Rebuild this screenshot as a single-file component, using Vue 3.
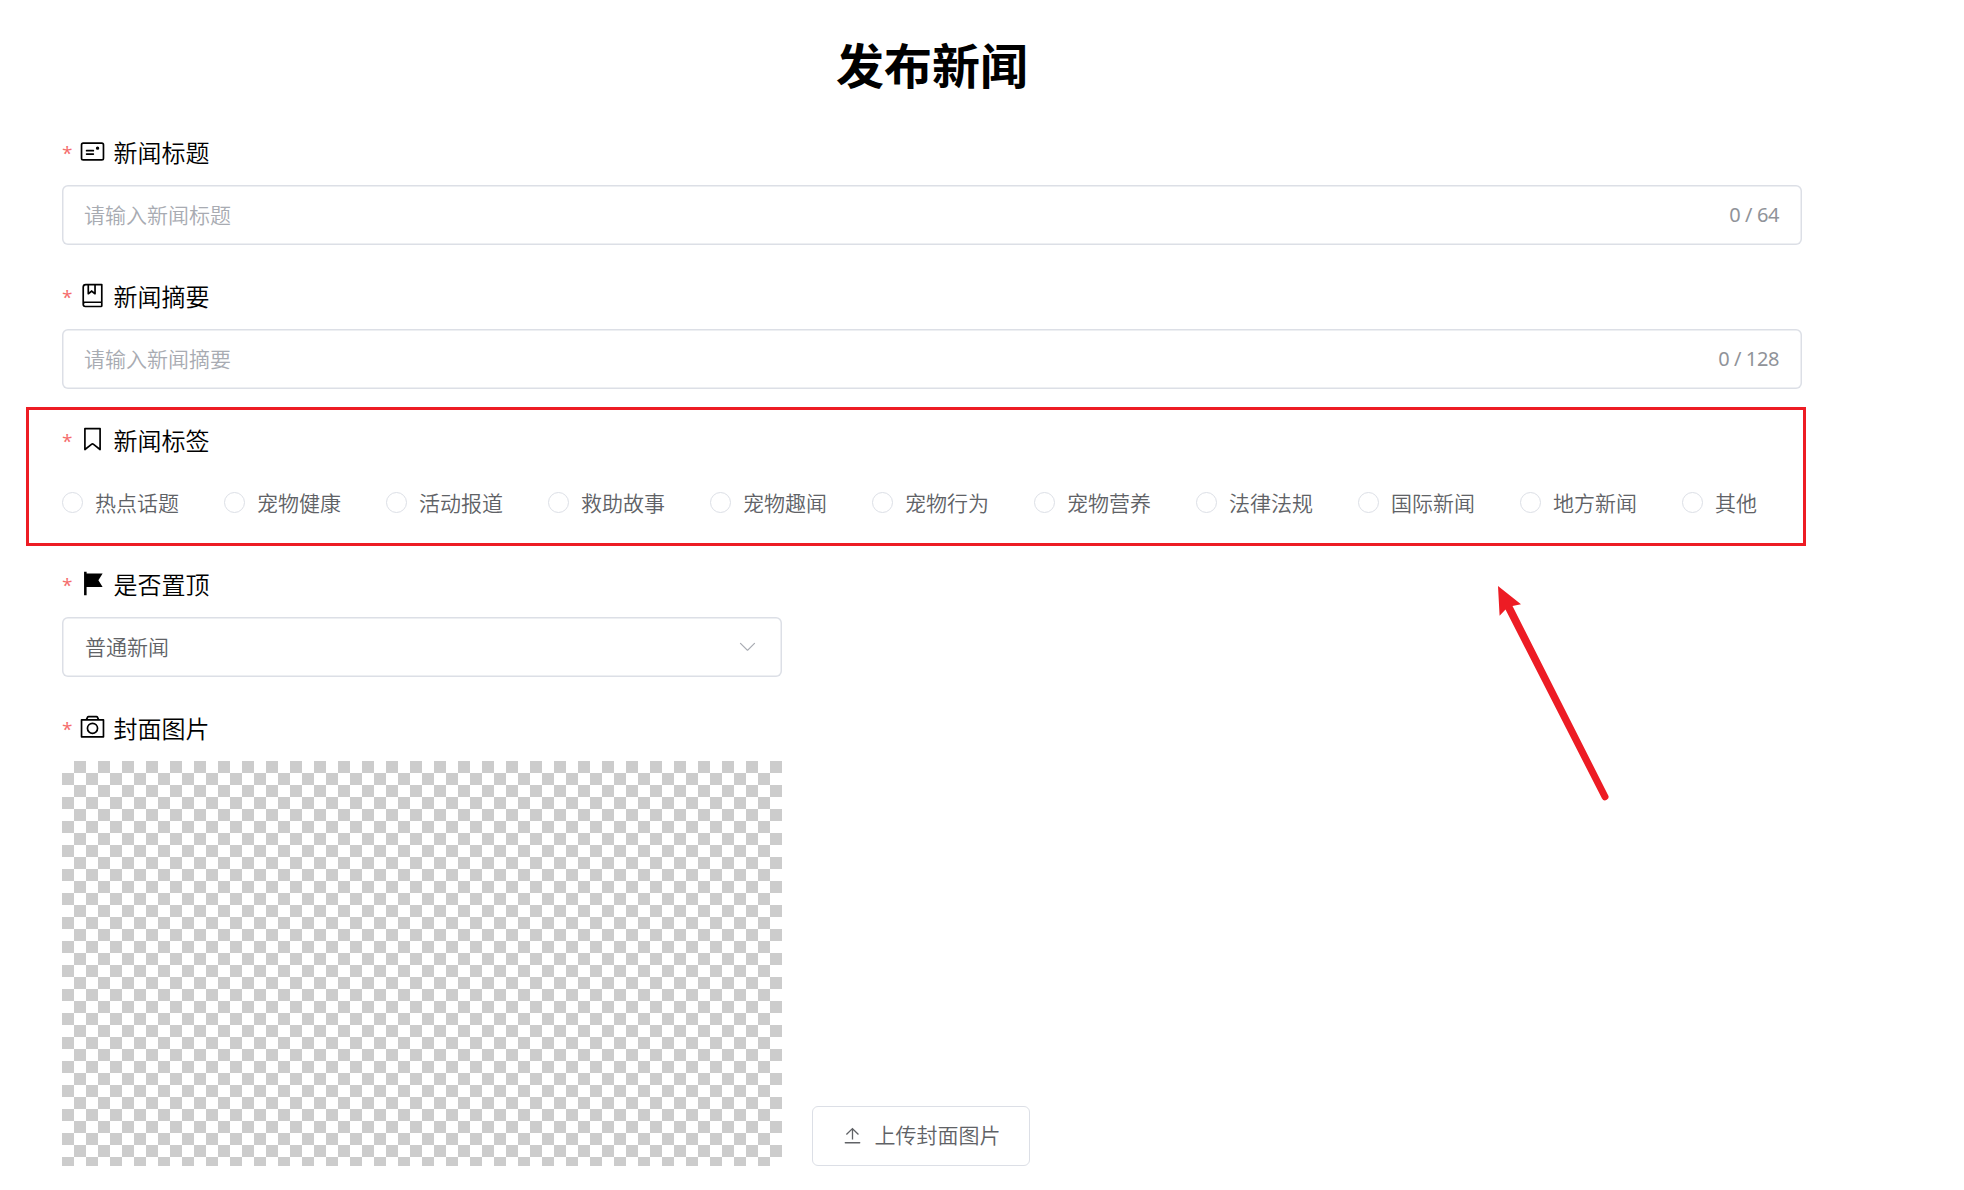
<script setup>
const tags = ['热点话题', '宠物健康', '活动报道', '救助故事', '宠物趣闻', '宠物行为', '宠物营养', '法律法规', '国际新闻', '地方新闻', '其他']
const icons = {
  postcard: 'M160 224a32 32 0 0 0-32 32v512a32 32 0 0 0 32 32h704a32 32 0 0 0 32-32V256a32 32 0 0 0-32-32zm0-64h704a96 96 0 0 1 96 96v512a96 96 0 0 1-96 96H160a96 96 0 0 1-96-96V256a96 96 0 0 1 96-96M704 320a64 64 0 1 1 0 128 64 64 0 0 1 0-128M288 448h256q32 0 32 32t-32 32H288q-32 0-32-32t32-32m0 128h256q32 0 32 32t-32 32H288q-32 0-32-32t32-32',
  collection: 'M192 736h640V128H256a64 64 0 0 0-64 64zm64-672h608a32 32 0 0 1 32 32v672a32 32 0 0 1-32 32H160l-32 57.536V192A128 128 0 0 1 256 64M240 800a48 48 0 1 0 0 96h592v-96zm0-64h656v160a64 64 0 0 1-64 64H240a112 112 0 0 1 0-224m144-608v250.88l96-76.8 96 76.8V128zm-64-64h320v381.44a32 32 0 0 1-51.968 24.96L480 384l-108.032 86.4A32 32 0 0 1 320 445.44z',
  tag: 'M256 128v698.88l196.032-156.864a96 96 0 0 1 119.936 0L768 826.88V128zm-32-64h576a32 32 0 0 1 32 32v797.44a32 32 0 0 1-51.968 24.96L531.968 720a32 32 0 0 0-39.936 0L243.968 918.4A32 32 0 0 1 192 893.44V96a32 32 0 0 1 32-32',
  flag: 'M288 128h608L736 384l160 256H288v320h-96V64h96z',
  camera: 'M896 256H128v576h768zm-199.424-64-32.064-64h-304.96l-32 64zM96 192h160l46.336-92.608A64 64 0 0 1 359.552 64h304.96a64 64 0 0 1 57.216 35.328L768.192 192H928a32 32 0 0 1 32 32v640a32 32 0 0 1-32 32H96a32 32 0 0 1-32-32V224a32 32 0 0 1 32-32m416 512a160 160 0 1 0 0-320 160 160 0 0 0 0 320m0 64a224 224 0 1 1 0-448 224 224 0 0 1 0 448',
}
const items = [
  { label: '新闻标题', icon: icons.postcard, type: 'input', placeholder: '请输入新闻标题', count: '0 / 64' },
  { label: '新闻摘要', icon: icons.collection, type: 'input', placeholder: '请输入新闻摘要', count: '0 / 128' },
  { label: '新闻标签', icon: icons.tag, type: 'radio' },
  { label: '是否置顶', icon: icons.flag, type: 'select', value: '普通新闻' },
  { label: '封面图片', icon: icons.camera, type: 'cover' },
]
</script>

<template>
  <main class="page">
    <h1 class="title">发布新闻</h1>
    <section v-for="item in items" :key="item.label" class="item">
      <div class="label">
        <span class="star">*</span>
        <svg class="icon" viewBox="0 0 1024 1024"><path :d="item.icon" fill="currentColor" /></svg>
        <span class="name">{{ item.label }}</span>
      </div>
      <div v-if="item.type === 'input'" class="field">
        <span class="placeholder">{{ item.placeholder }}</span>
        <span class="count">{{ item.count }}</span>
      </div>
      <div v-else-if="item.type === 'radio'" class="radios">
        <span v-for="t in tags" :key="t" class="radio"><i class="circle"></i><span>{{ t }}</span></span>
      </div>
      <div v-else-if="item.type === 'select'" class="field select">
        <span>{{ item.value }}</span>
        <svg class="arrow-down" viewBox="0 0 1024 1024"><path fill="currentColor" d="M831.872 340.864 512 652.672 192.128 340.864a30.592 30.592 0 0 0-42.752 0 29.12 29.12 0 0 0 0 41.6L489.664 714.24a32 32 0 0 0 44.672 0l340.288-331.712a29.12 29.12 0 0 0 0-41.728 30.592 30.592 0 0 0-42.752 0z" /></svg>
      </div>
      <div v-else class="cover">
        <div class="preview"></div>
        <button class="upload">
          <svg class="upload-icon" viewBox="0 0 1024 1024"><path fill="currentColor" d="M160 832h704a32 32 0 1 1 0 64H160a32 32 0 1 1 0-64m384-578.304V704h-64V247.296L237.248 490.048 192 444.8 508.8 128l316.8 316.8-45.312 45.248z" /></svg>
          <span class="upload-text">上传封面图片</span>
        </button>
      </div>
    </section>
    <div class="highlight"></div>
    <svg class="pointer" viewBox="0 0 120 225" fill="#ed1c24">
      <path d="M0 0 23 18.3 14.5 20 110 209A3.3 3.3 0 0 1 104 212.5L7.5 23.5 1.6 29.8z" />
    </svg>
  </main>
</template>

<style>
body {
  margin: 0;
  background: #fff;
}
</style>

<style scoped>
.page {
  position: relative;
  box-sizing: border-box;
  width: 1964px;
  height: 1190px;
  padding: 28px 162px 0 62px;
  overflow: hidden;
  font-family: "Noto Sans CJK SC", sans-serif;
  font-size: 21px;
  font-weight: 350;
  color: #606266;
}
.title {
  height: 70px;
  margin: 0 0 37px;
  line-height: 70px;
  font-size: 48px;
  font-weight: 700;
  text-align: center;
  color: #000;
}
.item {
  margin-bottom: 34px;
}
.label {
  display: flex;
  align-items: center;
  height: 33px;
  margin-bottom: 17px;
  color: #000;
  font-size: 24px;
  line-height: 33px;
}
.star {
  width: 16.5px;
  padding-top: 3px;
  color: #f56c6c;
  font-family: "Open Sans", sans-serif;
  font-size: 19px;
  font-weight: 400;
}
.icon {
  width: 27px;
  height: 27px;
  margin-right: 8px;
}
.field {
  display: flex;
  align-items: center;
  justify-content: space-between;
  box-sizing: border-box;
  height: 60px;
  padding: 0 23px 2px;
  border-radius: 6px;
  box-shadow: inset 0 0 0 1.5px #dcdfe6;
}
.placeholder {
  margin-left: -1px;
  padding-bottom: 1px;
  color: #a8abb2;
}
.count {
  font-family: "Noto Sans", "Noto Sans CJK SC", sans-serif;
  font-size: 20px;
  font-weight: 400;
  letter-spacing: -0.4px;
  padding-top: 1px;
  color: #909399;
}
.select {
  width: 720px;
}
.arrow-down {
  width: 21px;
  height: 21px;
  margin-right: 1px;
  color: #a8abb2;
}
.radios {
  display: flex;
  align-items: center;
  gap: 45px;
  box-sizing: border-box;
  height: 60px;
  padding-bottom: 2px;
}
.radio {
  display: flex;
  align-items: center;
  gap: 12px;
  white-space: nowrap;
}
.circle {
  box-sizing: border-box;
  width: 21px;
  height: 21px;
  border: 1px solid #dcdfe6;
  border-radius: 50%;
}
.cover {
  display: flex;
  align-items: flex-end;
  gap: 30px;
}
.preview {
  width: 720px;
  height: 405px;
  background: conic-gradient(#fff 25%, #ccc 0 50%, #fff 0 75%, #ccc 0) 12px 0 / 24px 24px;
}
.upload {
  display: flex;
  align-items: center;
  justify-content: center;
  box-sizing: border-box;
  width: 218px;
  height: 60px;
  padding: 0 0 1px;
  gap: 12px;
  border: 1px solid #dcdfe6;
  border-radius: 6px;
  background: #fff;
  color: #606266;
  font: inherit;
}
.upload-icon {
  width: 21px;
  height: 21px;
}
.upload-text {
  padding-bottom: 3px;
}
.highlight {
  position: absolute;
  left: 26px;
  top: 407px;
  box-sizing: border-box;
  width: 1780px;
  height: 139px;
  border: 3px solid #ed1c24;
}
.pointer {
  position: absolute;
  left: 1498px;
  top: 586px;
  width: 120px;
  height: 225px;
}
</style>
